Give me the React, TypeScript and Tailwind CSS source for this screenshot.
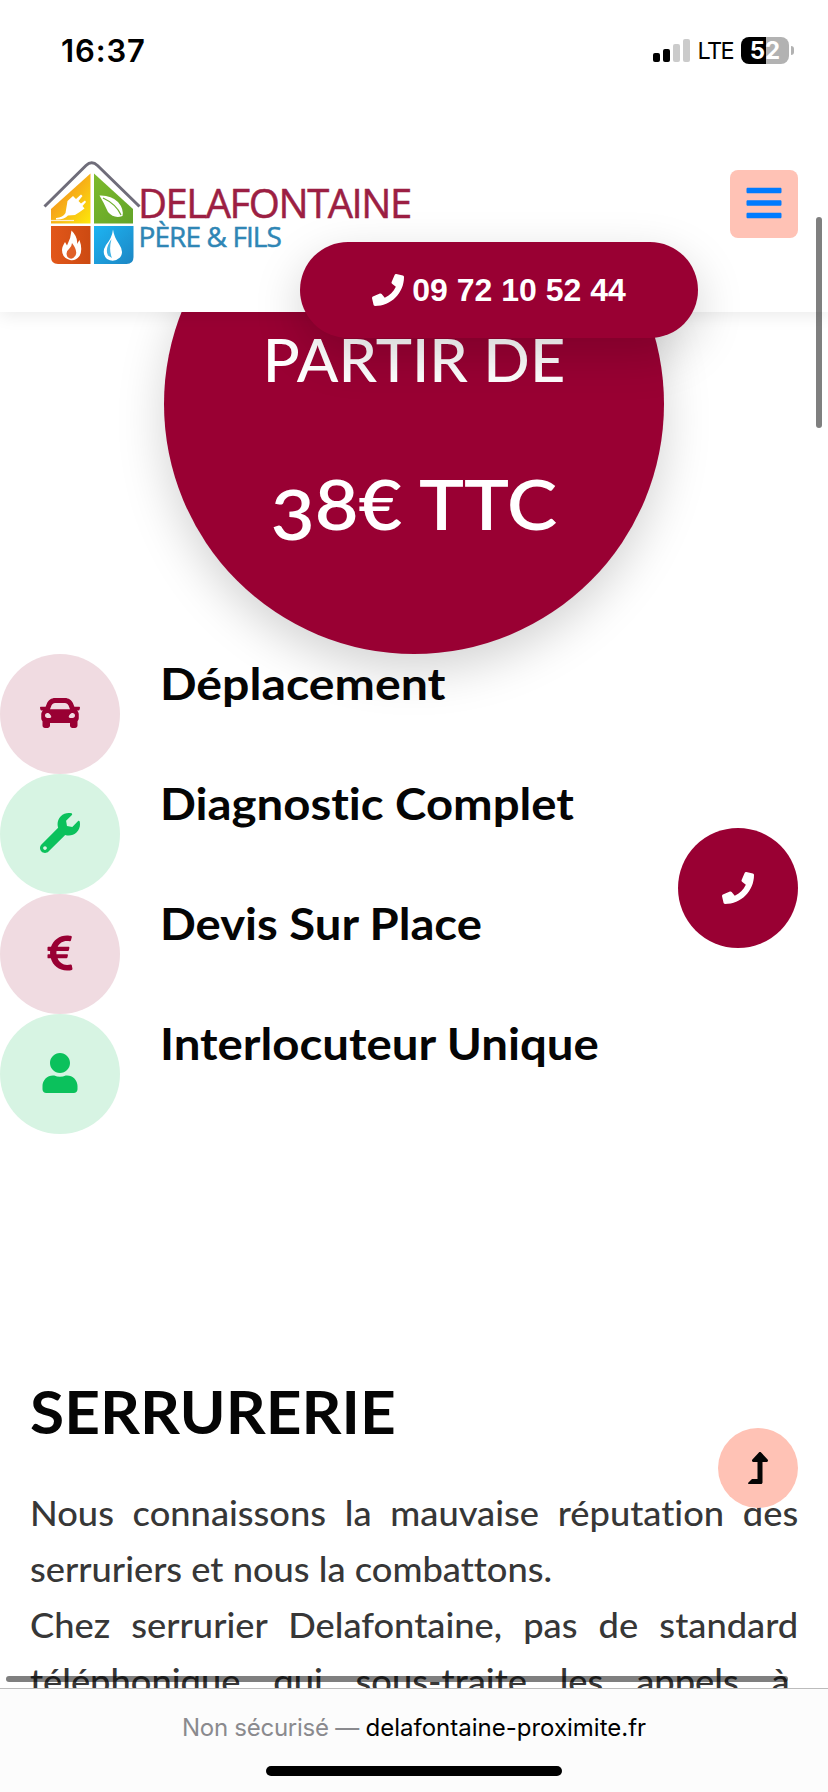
import type { IconType } from 'react-icons'
import { FaBars, FaCar, FaEuroSign, FaLevelUpAlt, FaPhone, FaUser, FaWrench } from 'react-icons/fa'

type Feature = {
  label: string
  icon: IconType
  tone: string
  stretch: string
}

const features: Feature[] = [
  {
    label: 'Déplacement',
    icon: FaCar,
    tone: 'bg-[#f0dbe1] text-[#990033]',
    stretch: 'scale-x-[1.096]',
  },
  {
    label: 'Diagnostic Complet',
    icon: FaWrench,
    tone: 'bg-[#d7f4e3] text-[#0bc15c]',
    stretch: 'scale-x-[1.075]',
  },
  {
    label: 'Devis Sur Place',
    icon: FaEuroSign,
    tone: 'bg-[#f0dbe1] text-[#990033]',
    stretch: 'scale-x-[1.073]',
  },
  {
    label: 'Interlocuteur Unique',
    icon: FaUser,
    tone: 'bg-[#d7f4e3] text-[#0bc15c]',
    stretch: 'scale-x-[1.077]',
  },
]

function StatusBar() {
  return (
    <div className="flex h-[100px] items-center justify-between pr-[34px] pl-[61px] font-['Inter',sans-serif] text-black">
      <span className="text-[31px] leading-none font-semibold tracking-[0.86px]">16:37</span>
      <div className="flex items-center">
        <div className="mr-[7px] flex h-[23px] items-end gap-[3px]">
          <span className="h-[9px] w-[7px] rounded-[2px] bg-black" />
          <span className="h-[13px] w-[7px] rounded-[2px] bg-black" />
          <span className="h-[18px] w-[7px] rounded-[2px] bg-[#cbcbcb]" />
          <span className="h-[23px] w-[7px] rounded-[2px] bg-[#cbcbcb]" />
        </div>
        <span className="mt-[2px] mr-[8px] text-[23.5px] leading-none tracking-[-1.6px]">LTE</span>
        <div className="flex h-[27px] w-12 items-center justify-center rounded-[8px] bg-[linear-gradient(to_right,#000_25px,#b2b2b2_25px)] pt-px text-[24px] leading-none font-bold text-white">
          52
        </div>
        <span className="ml-[2px] h-[9px] w-[3px] rounded-r-full bg-[#b2b2b2]" />
      </div>
    </div>
  )
}

function Logo() {
  return (
    <svg className="h-[110px] w-[372px]" viewBox="42 158 372 110" fill="none">
      <defs>
        <linearGradient id="plug" x1="0" y1="0" x2="1" y2="1">
          <stop offset="0.3" stopColor="#f59a1d" />
          <stop offset="1" stopColor="#fde90a" />
        </linearGradient>
        <linearGradient id="leaf" x1="0" y1="0" x2="1" y2="1">
          <stop offset="0" stopColor="#7dba2c" />
          <stop offset="1" stopColor="#63a429" />
        </linearGradient>
        <linearGradient id="fire" x1="0" y1="0" x2="1" y2="0">
          <stop offset="0" stopColor="#e2571a" />
          <stop offset="1" stopColor="#cc4a12" />
        </linearGradient>
        <linearGradient id="water" x1="0" y1="0" x2="1" y2="1">
          <stop offset="0" stopColor="#1db4f2" />
          <stop offset="1" stopColor="#1c86c4" />
        </linearGradient>
      </defs>

      <path d="M90.5 173.5V223.5H51V209Z" fill="url(#plug)" />
      <path d="M94 173.5V223.5H133V209Z" fill="url(#leaf)" />
      <path d="M51 226H90.5V264H58Q51 264 51 257Z" fill="url(#fire)" />
      <path d="M94 226H133.5V257Q133.5 264 126.5 264H94Z" fill="url(#water)" />
      <path d="M51 220.5H74" stroke="#fdeccb" strokeWidth="1.2" />
      <path
        d="M44.5 206.5L86 165.5Q91.7 160 97.5 165.5L139.5 206.5"
        stroke="#6f6d7a"
        strokeWidth="3"
      />

      {/* plug */}
      <path
        d="M67.5 201L73 196L76 199L81 194.5L82.5 196L78.5 201L81 203.5L85 200.5L86 202L82.5 206L84.5 208.5Q80 212 75 215L68 215.5Q64 220 56 219.5L56 218Q63 217.5 65.5 213Z"
        fill="#fff"
      />
      {/* leaf */}
      <path d="M99.5 195.5Q111 195 118 202Q124 209 122.5 216Q114 219 108 212Q104 203 99.5 195.5Z" fill="#fff" />
      <path d="M103 198Q116 204 121 215" stroke="#6fb02e" strokeWidth="1.2" />
      {/* flame */}
      <path
        d="M71.5 230.5Q78 237 77 244L79.5 240Q83 250 79.5 256Q75 261.5 70 260Q62 258 62 250Q62 247 65 242L67 245.5Q71 238 71.5 230.5Z"
        fill="#fff"
      />
      <path d="M72 243Q78 251 75.5 255.5Q72 261 67.5 257Q65 252 69 249Q72 246 72 243Z" fill="#e06028" />
      {/* drop */}
      <path
        d="M113 229.5Q114 237 119 244Q124.5 252 120 257.5Q114 263 107 259Q101 253 106 245Q112 238 113 229.5Z"
        fill="#fff"
      />
      <path d="M111.5 239Q104.5 249 108 255.5L112 258Q108.5 250 111.5 239Z" fill="#45b5e6" />

      <text
        x="138"
        y="217.5"
        fill="#9c1f43"
        stroke="#9c1f43"
        strokeWidth="0.5"
        fontFamily="Open Sans, sans-serif"
        fontSize="40"
        letterSpacing="-1.45"
      >
        DELAFONTAINE
      </text>
      <text
        x="138.5"
        y="247"
        fill="#2f86b5"
        stroke="#2f86b5"
        strokeWidth="0.5"
        fontFamily="Open Sans, sans-serif"
        fontSize="28"
        letterSpacing="-0.9"
      >
        PÈRE &amp; FILS
      </text>
    </svg>
  )
}

function Header() {
  return (
    <header className="relative z-10 h-[312px] bg-white shadow-[0_4px_16px_rgba(0,0,0,0.08)]">
      <StatusBar />
      <div className="flex items-start justify-between pt-[58px] pr-[30px] pl-[42px]">
        <Logo />
        <button
          type="button"
          aria-label="Menu"
          className="mt-3 flex h-[68px] w-[68px] items-center justify-center rounded-[8px] bg-[#ffc2b5] pb-[2px] text-[#007bff]"
        >
          <FaBars className="h-10 w-10" />
        </button>
      </div>
      <a
        href="tel:0972105244"
        className="absolute top-[242px] left-[300px] flex h-24 w-[398px] items-center justify-center rounded-full bg-[#990033] font-['Liberation_Sans',sans-serif] text-[32px] leading-none font-bold whitespace-pre text-white shadow-[0_16px_48px_rgba(0,0,0,0.175)]"
      >
        <FaPhone className="mr-[8px] h-8 w-8" />
        09 72 10 52 44
      </a>
    </header>
  )
}

function PriceBadge() {
  return (
    <div className="mx-auto -mt-[158px] h-[500px] w-[500px] rounded-full bg-[#990033] pt-[160px] text-center text-white shadow-[0_16px_48px_rgba(0,0,0,0.175)]">
      <p className="scale-x-[1.02] text-[60px] leading-[90px] font-medium">PARTIR DE</p>
      <p className="mt-[47px] scale-x-[1.08] text-[70px] leading-[105px] font-semibold">
        <span className="inline-block translate-y-[10px]">3</span>8€ TTC
      </p>
    </div>
  )
}

function FeatureRow({ feature }: { feature: Feature }) {
  const Icon = feature.icon

  return (
    <li className="flex h-[120px] gap-10">
      <div
        className={`flex h-[120px] w-[120px] items-center justify-center rounded-full pb-[2px] ${feature.tone}`}
      >
        <Icon className="h-10 w-10" />
      </div>
      <h3
        className={`origin-left text-[44px] leading-[58px] font-bold text-[#050505] ${feature.stretch}`}
      >
        {feature.label}
      </h3>
    </li>
  )
}

export default function App() {
  return (
    <div className="relative h-[1792px] w-[828px] overflow-hidden bg-white font-['Lato',sans-serif] [font-variant-ligatures:none]">
      <Header />

      <main>
        <PriceBadge />

        <ul className="relative">
          {features.map((feature) => (
            <FeatureRow key={feature.label} feature={feature} />
          ))}
        </ul>

        <section className="mt-[241px] px-[30px]">
          <h2 className="origin-left scale-x-[1.037] text-[60px] leading-[72px] font-bold text-[#050505]">
            SERRURERIE
          </h2>
          <div className="mt-[38px] w-[720px] origin-left scale-x-[1.067] text-justify text-[34px] leading-[56px] font-medium text-[#373737]">
            <p>Nous connaissons la mauvaise réputation des serruriers et nous la combattons.</p>
            <p className="[text-align-last:justify]">
              Chez serrurier Delafontaine, pas de standard
            </p>
            <p className="pr-[8px] [text-align-last:justify]">
              téléphonique qui sous-traite les appels à
            </p>
          </div>
        </section>
      </main>

      <a
        href="tel:0972105244"
        aria-label="Appeler"
        className="absolute top-[828px] right-[30px] flex h-[120px] w-[120px] items-center justify-center rounded-full bg-[#990033] text-white"
      >
        <FaPhone className="h-8 w-8" />
      </a>
      <button
        type="button"
        aria-label="Haut de page"
        className="absolute top-[1428px] right-[30px] flex h-20 w-20 items-center justify-center rounded-full bg-[#ffc2b5] text-[#050505]"
      >
        <FaLevelUpAlt className="h-8 w-8" />
      </button>

      {/* scroll indicators */}
      <span className="absolute top-[217px] right-[6px] z-20 h-[211px] w-[6px] rounded-full bg-black/50" />
      <span className="absolute top-[1676px] left-[6px] h-[6px] w-[782px] rounded-full bg-black/50" />

      <footer className="absolute inset-x-0 bottom-0 flex h-[104px] flex-col items-center border-t border-[#bcbcbc] bg-[#fcfcfc] pt-[27px] font-['Inter',sans-serif] text-[24px] leading-[24px]">
        <p className="whitespace-pre text-black">
          <span className="tracking-[-0.25px] text-[#8a8a8e]">Non sécurisé — </span>
          <span>delafontaine-proximite.fr</span>
        </p>
        <span className="mt-[26px] h-[10px] w-[296px] rounded-full bg-black" />
      </footer>
    </div>
  )
}
